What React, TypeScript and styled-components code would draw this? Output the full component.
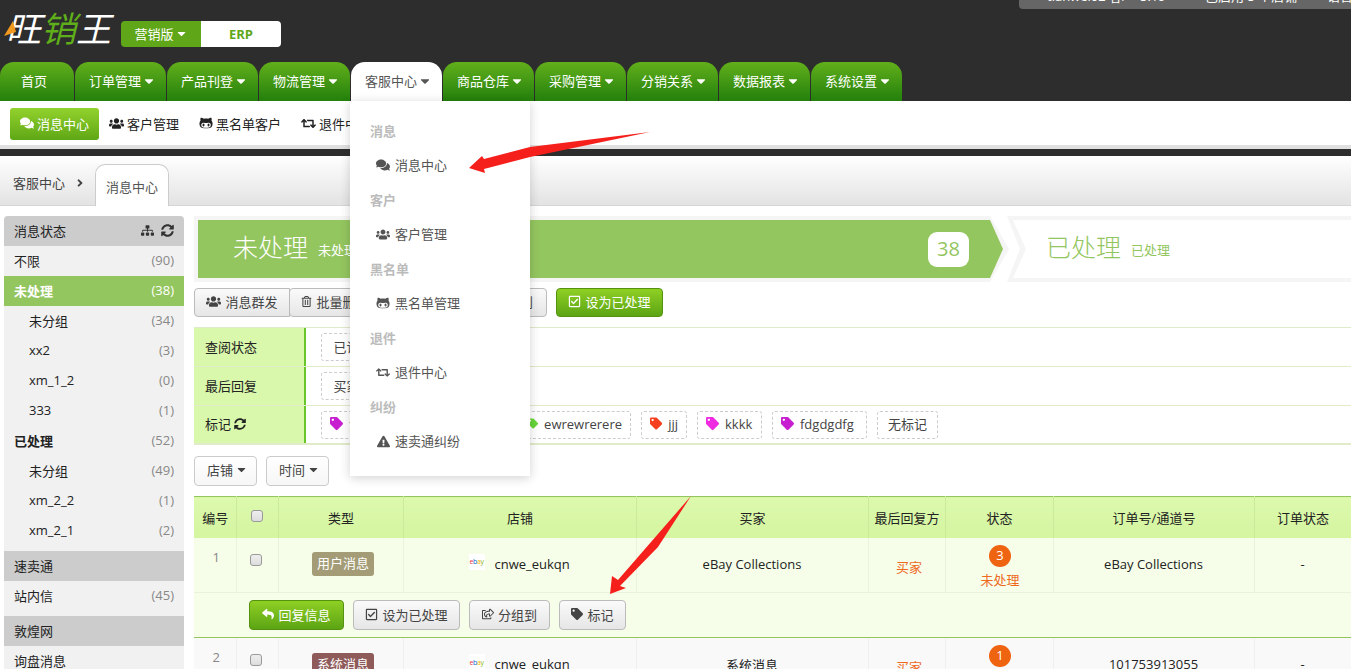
import React from 'react'
import styled, { createGlobalStyle } from 'styled-components'
import {
  FaBars,
  FaCaretDown,
  FaComments,
  FaUsers,
  FaGithubAlt,
  FaRetweet,
  FaExclamationTriangle,
  FaSitemap,
  FaSyncAlt,
  FaRegTrashAlt,
  FaRegCheckSquare,
  FaRegShareSquare,
  FaTag,
  FaReply,
  FaAngleRight,
} from 'react-icons/fa'

const GlobalStyle = createGlobalStyle`
  html, body {
    margin: 0;
    padding: 0;
    height: 669px;
    overflow: hidden;
    background: #fff;
    color: #333;
    font-family: "Open Sans", "Noto Sans CJK SC", sans-serif;
    font-size: 13px;
  }
  * { box-sizing: border-box; }
`

const Page = styled.div`
  position: relative;
  width: 1351px;
  height: 669px;
  overflow: hidden;
`

const Header = styled.header`
  position: relative;
  height: 101px;
  background: #2d2d2d;
  display: flex;
  flex-direction: column;
  justify-content: space-between;
`

const UserBar = styled.div`
  position: absolute;
  top: -13px;
  right: 0;
  width: 332px;
  height: 22px;
  padding-left: 8px;
  background: #666;
  border-radius: 0 0 0 4px;
  color: #fff;
  line-height: 18px;
  white-space: nowrap;
  overflow: hidden;
  display: flex;
`

const UserCell = styled.span<{ $w: number }>`
  width: ${(p) => p.$w}px;
  flex: none;
`

const BrandRow = styled.div`
  display: flex;
  align-items: center;
  height: 62px;
  padding: 4px 0 0 4px;
`

const Logo = styled.div`
  position: relative;
  width: 117px;
  padding-left: 2px;
  margin-top: -12px;
  font-size: 35px;
  line-height: 40px;
  font-style: italic;
  color: #fff;
  white-space: nowrap;
  font-family: "Noto Sans CJK SC", sans-serif;
`

const LogoGreen = styled.span`
  color: #5fae1a;
`

const LogoMark = styled.svg`
  position: absolute;
  left: 0;
  top: 14px;
`

const VersionSwitch = styled.div`
  display: flex;
  width: 160px;
  height: 26px;
  margin-top: 2px;
  border-radius: 4px;
  overflow: hidden;
`

const VersionOn = styled.div`
  width: 80px;
  padding-bottom: 1px;
  display: flex;
  align-items: center;
  justify-content: center;
  gap: 1px;
  background: #5fa718;
  color: #fff;
`

const VersionOff = styled.div`
  width: 80px;
  display: flex;
  align-items: center;
  justify-content: center;
  background: #fff;
  color: #5fa718;
  font-weight: 700;
  font-size: 13px;
`

const Nav = styled.nav`
  display: flex;
  gap: 1px;
  height: 39px;
`

const Tab = styled.div<{ $active?: boolean; $w: number; $pad: number }>`
  width: ${(p) => p.$w}px;
  display: flex;
  align-items: center;
  gap: 1px;
  padding: 0 0 2px ${(p) => p.$pad}px;
  border-radius: 14px 14px 0 0;
  background: ${(p) => (p.$active ? '#fff' : 'linear-gradient(#62af1b, #23800c)')};
  color: ${(p) => (p.$active ? '#555' : '#fff')};
  white-space: nowrap;
  svg { font-size: 14px; }
`

const SubNav = styled.div`
  height: 48px;
  background: #fff;
  border-bottom: 4px solid #e0e0e0;
  padding: 7px 10px 0;
  display: flex;
  gap: 10px;
  align-items: flex-start;
`

const SubActive = styled.div`
  height: 32px;
  width: 89px;
  padding-bottom: 2px;
  border-radius: 3px;
  background: linear-gradient(#93d22d, #5fa716);
  color: #fff;
  display: flex;
  align-items: center;
  justify-content: center;
  gap: 3px;
`

const SubItem = styled.div`
  height: 32px;
  padding-bottom: 2px;
  display: flex;
  align-items: center;
  gap: 3px;
  color: #222;
  margin-right: 10px;
  white-space: nowrap;
`

const DarkStrip = styled.div`
  height: 7px;
  background: #2d2d2d;
`

const Crumbs = styled.div`
  height: 50px;
  background: linear-gradient(#fff, #e3e3e3);
  border-bottom: 1px solid #d5d5d5;
  display: flex;
  align-items: flex-end;
  padding-left: 13px;
`

const CrumbText = styled.div`
  display: flex;
  align-items: center;
  gap: 9px;
  height: 41px;
  width: 82px;
  padding-bottom: 4px;
  color: #444;
  white-space: nowrap;
  svg { font-size: 12px; }
`

const CrumbTab = styled.div`
  width: 74px;
  height: 42px;
  margin-bottom: -1px;
  background: #fff;
  border: 1px solid #ccc;
  border-bottom: none;
  border-radius: 10px 10px 0 0;
  display: flex;
  align-items: center;
  justify-content: center;
  padding-top: 1px;
  color: #555;
`

const Body = styled.div`
  display: flex;
  gap: 10px;
  padding: 10px 0 0 4px;
`

const Sidebar = styled.aside`
  width: 180px;
  flex: none;
  background: #f1f1f1;
  border-radius: 4px 4px 0 0;
  overflow: hidden;
`

const SideHead = styled.div<{ $gap?: number }>`
  height: 30px;
  margin-top: ${(p) => p.$gap || 0}px;
  background: #ccc;
  padding: 0 10px 2px;
  display: flex;
  align-items: center;
  justify-content: space-between;
  color: #222;
`

const SideIcons = styled.div`
  display: flex;
  gap: 7px;
  color: #333;
  font-size: 13px;
  line-height: 0;
`

const SideRow = styled.div<{ $active?: boolean; $indent?: boolean; $bold?: boolean }>`
  height: 30px;
  padding: 0 10px 2px ${(p) => (p.$indent ? 25 : 10)}px;
  display: flex;
  align-items: center;
  justify-content: space-between;
  background: ${(p) => (p.$active ? '#94c65f' : 'transparent')};
  color: ${(p) => (p.$active ? '#fff' : '#222')};
  font-weight: ${(p) => (p.$bold ? 700 : 400)};
`

const Count = styled.span<{ $active?: boolean }>`
  font-weight: 400;
  color: ${(p) => (p.$active ? '#fff' : '#888')};
`

const Main = styled.main`
  flex: 1;
  min-width: 0;
`

const Steps = styled.div`
  display: flex;
  height: 66px;
`

const StepOn = styled.div`
  width: 815px;
  flex: none;
  padding: 4px 0 4px 4px;
  background: #f5f5f5;
  clip-path: polygon(0 0, 796px 0, 815px 50%, 796px 100%, 0 100%);
`

const StepOnInner = styled.div`
  height: 58px;
  width: 805px;
  background: #94c65f;
  clip-path: polygon(0 0, 792px 0, 805px 50%, 792px 100%, 0 100%);
  display: flex;
  align-items: center;
  padding: 0 0 0 35px;
  color: #fff;
`

const StepOff = styled.div`
  flex: 1;
  margin-left: -2px;
  padding: 4px 0 4px 6px;
  background: #f5f5f5;
  clip-path: polygon(0 0, 100% 0, 100% 100%, 0 100%, 13px 50%);
`

const StepOffInner = styled.div`
  height: 58px;
  background: #fff;
  clip-path: polygon(0 0, 100% 0, 100% 100%, 0 100%, 13px 50%);
  display: flex;
  align-items: center;
  padding-left: 33px;
  color: #94c65f;
`

const StepTitle = styled.span`
  font-size: 25px;
  font-weight: 300;
  font-family: "Noto Sans CJK SC", sans-serif;
  margin: -7px 10px 0 0;
`

const StepSub = styled.span`
  font-size: 13px;
  flex: 1;
  margin-top: 1px;
`

const StepBadge = styled.span`
  width: 41px;
  height: 35px;
  margin-right: 34px;
  padding-bottom: 2px;
  border-radius: 9px;
  background: #fff;
  color: #94c65f;
  font-size: 20px;
  display: flex;
  align-items: center;
  justify-content: center;
`

const Toolbar = styled.div`
  display: flex;
  gap: 9px;
  margin-top: 6px;
`

const BtnGroup = styled.div`
  display: flex;
  > * { border-radius: 0; margin-left: -1px; }
  > *:first-child { border-radius: 4px 0 0 4px; margin-left: 0; }
  > *:last-child { border-radius: 0 4px 4px 0; }
`

const Btn = styled.button<{ $w?: number; $h?: number }>`
  height: ${(p) => p.$h || 29}px;
  width: ${(p) => (p.$w ? `${p.$w}px` : 'auto')};
  padding: 0 10px 2px;
  border: 1px solid #bbb;
  border-radius: 4px;
  background: linear-gradient(#fafafa, #e6e6e6);
  color: #444;
  font: inherit;
  display: inline-flex;
  align-items: center;
  justify-content: center;
  gap: 4px;
  white-space: nowrap;
  svg { flex: none; }
`

const EndBtn = styled(Btn)`
  justify-content: flex-end;
  padding-right: 13px;
`

const GreenBtn = styled(Btn)`
  border-color: #55930f;
  background: linear-gradient(#8fd024, #5ca414);
  color: #fff;
`

const DropBtn = styled(Btn)`
  justify-content: flex-start;
  height: 30px;
  padding: 0 0 3px 12px;
  gap: 2px;
  border-color: #ccc;
  background: linear-gradient(#fff, #f6f6f6);
  svg { font-size: 13px; }
`

const Filters = styled.div`
  margin-top: 10px;
`

const FilterRow = styled.div<{ $h: number; $thick?: boolean }>`
  display: flex;
  height: ${(p) => p.$h}px;
  border-bottom: ${(p) => (p.$thick ? 2 : 1)}px solid #e0ebc9;
  &:first-child { border-top: 1px solid #e0ebc9; }
`

const FilterLabel = styled.div`
  width: 112px;
  flex: none;
  background: #d9f8ab;
  border-right: 2px solid #69c52c;
  padding: 0 0 2px 11px;
  display: flex;
  align-items: center;
  gap: 3px;
  color: #222;
`

const FilterTags = styled.div`
  display: flex;
  align-items: center;
  gap: 10px;
  padding-left: 15px;
`

const Chip = styled.div<{ $w?: number }>`
  height: 28px;
  width: ${(p) => (p.$w ? `${p.$w}px` : 'auto')};
  flex: none;
  padding: 0 8px 2px;
  border: 1px dashed #ccc;
  border-radius: 3px;
  display: flex;
  align-items: center;
  gap: 6px;
  color: #444;
  white-space: nowrap;
`

const PlainChip = styled(Chip)`
  justify-content: center;
`

const Dropdowns = styled.div`
  display: flex;
  gap: 9px;
  margin-top: 11px;
`

const Table = styled.table`
  width: 1157px;
  margin-top: 10px;
  border-collapse: collapse;
  table-layout: fixed;
`

const Th = styled.th`
  height: 41px;
  padding: 0 0 0 1px;
  background: linear-gradient(#dcf9ad, #d5f5a0);
  border-top: 1px solid #94c65f;
  border-right: 1px solid #c9eb9a;
  font-weight: 400;
  color: #222;
  white-space: nowrap;
`

const Td = styled.td<{ $alt?: boolean }>`
  height: 55px;
  padding: 0 0 2px;
  text-align: center;
  background: ${(p) => (p.$alt ? '#f9f9f9' : '#f6fee9')};
  border-right: 1px solid ${(p) => (p.$alt ? '#efefef' : '#e9f2da')};
  border-bottom: 1px solid #e9f2da;
  color: #222;
`

const TopTd = styled(Td)`
  vertical-align: top;
  padding: 10px 0 0;
  color: #888;
`

const NumberTd = styled(TopTd)`
  padding-left: 3px;
`

const TypeTd = styled(Td)`
  padding: 0 0 1px 5px;
`

const ReplierTd = styled(Td)`
  padding: 3px 0 0 5px;
`

const StatusTd = styled(TopTd)`
  padding: 7px 0 0 2px;
`

const ActionTd = styled.td`
  height: 45px;
  padding: 0 0 0 55px;
  background: #f6fee9;
  border-bottom: 1px solid #94c65f;
`

const Actions = styled.div`
  display: flex;
  gap: 9px;
`

const Check = styled.span`
  display: inline-block;
  width: 12px;
  height: 12px;
  margin-right: 2px;
  border: 1px solid #999;
  border-radius: 3px;
  background: linear-gradient(#eee, #ddd);
`

const RowCheck = styled(Check)`
  margin-top: 6px;
`

const TypeLabel = styled.span<{ $color: string }>`
  display: inline-block;
  height: 24px;
  padding: 0 5px;
  line-height: 23px;
  border-radius: 3px;
  background: ${(p) => p.$color};
  color: #fff;
`

const Store = styled.div`
  display: flex;
  align-items: center;
  gap: 10px;
  padding-left: 65px;
`

const EbayMark = styled.span`
  width: 16px;
  height: 16px;
  background: #fff;
  display: inline-flex;
  align-items: center;
  justify-content: center;
  font-size: 7px;
  letter-spacing: -0.4px;
  margin-top: -4px;
  line-height: 1;
`

const Letter = styled.span<{ $c: string }>`
  color: ${(p) => p.$c};
`

const Orange = styled.div`
  color: #ee6a1f;
`

const StatusDot = styled.div`
  width: 22px;
  height: 22px;
  margin: 0 auto 3px;
  border-radius: 50%;
  background: #ee6411;
  color: #fff;
  line-height: 21px;
  text-align: center;
`

const Menu = styled.div`
  position: absolute;
  left: 350px;
  top: 101px;
  width: 180px;
  height: 375px;
  padding: 15px 0 0 20px;
  background: #fff;
  box-shadow: 0 2px 10px rgba(0, 0, 0, 0.18);
`

const MenuGroup = styled.div`
  height: 69px;
`

const MenuHead = styled.div`
  height: 30px;
  line-height: 30px;
  color: #bbb;
  font-weight: 700;
`

const MenuItem = styled.div`
  height: 24px;
  margin-top: 7px;
  padding-left: 6px;
  display: flex;
  align-items: center;
  gap: 5px;
  color: #555;
  line-height: 24px;
`

const MenuIcon = styled.span`
  width: 14px;
  display: flex;
  justify-content: center;
  flex: none;
`

const Arrow = styled.svg<{ $x: number; $y: number }>`
  position: absolute;
  left: ${(p) => p.$x}px;
  top: ${(p) => p.$y}px;
  pointer-events: none;
`

const tabs = [
  { label: '首页', w: 74, pad: 21 },
  { label: '订单管理', w: 91, pad: 14, caret: true },
  { label: '产品刊登', w: 91, pad: 14, caret: true },
  { label: '物流管理', w: 91, pad: 14, caret: true },
  { label: '客服中心', w: 91, pad: 14, caret: true, active: true },
  { label: '商品仓库', w: 91, pad: 14, caret: true },
  { label: '采购管理', w: 91, pad: 14, caret: true },
  { label: '分销关系', w: 91, pad: 14, caret: true },
  { label: '数据报表', w: 91, pad: 14, caret: true },
  { label: '系统设置', w: 91, pad: 14, caret: true },
]

const sideRows = [
  { label: '不限', n: 90 },
  { label: '未处理', n: 38, active: true, bold: true },
  { label: '未分组', n: 34, indent: true },
  { label: 'xx2', n: 3, indent: true },
  { label: 'xm_1_2', n: 0, indent: true },
  { label: '333', n: 1, indent: true },
  { label: '已处理', n: 52, bold: true },
  { label: '未分组', n: 49, indent: true },
  { label: 'xm_2_2', n: 1, indent: true },
  { label: 'xm_2_1', n: 2, indent: true },
]

const menuGroups = [
  { head: '消息', item: '消息中心', icon: <FaComments size={14} /> },
  { head: '客户', item: '客户管理', icon: <FaUsers size={15} /> },
  { head: '黑名单', item: '黑名单管理', icon: <FaGithubAlt size={14} /> },
  { head: '退件', item: '退件中心', icon: <FaRetweet size={15} /> },
  { head: '纠纷', item: '速卖通纠纷', icon: <FaExclamationTriangle size={13} /> },
]

const tags = [
  { label: 'ewrewrerere', color: '#66d63a', w: 112 },
  { label: 'jjj', color: '#f4401e', w: 46 },
  { label: 'kkkk', color: '#ee2be0', w: 65 },
  { label: 'fdgdgdfg', color: '#c71fd0', w: 95 },
]

const columns = [42, 42, 125, 233, 232, 77, 108, 201, 97]

const EbayLogo = () => (
  <EbayMark>
    <Letter $c="#e53238">e</Letter>
    <Letter $c="#0064d2">b</Letter>
    <Letter $c="#f5af02">a</Letter>
    <Letter $c="#86b817">y</Letter>
  </EbayMark>
)

export default function App() {
  return (
    <Page>
      <GlobalStyle />
      <Header>
        <UserBar>
          <UserCell $w={20}>
            <FaBars size={10} />
          </UserCell>
          <UserCell $w={93}>tianwei02 客/</UserCell>
          <UserCell $w={65}>5:19</UserCell>
          <UserCell $w={122}>已启用 5 个店铺</UserCell>
          <UserCell $w={30}>语言</UserCell>
        </UserBar>
        <BrandRow>
          <Logo>
            <LogoMark width="14" height="16" viewBox="0 0 14 16">
              <polygon points="0,15 9,0 12,11" fill="#f29a1f" />
            </LogoMark>
            旺<LogoGreen>销</LogoGreen>王
          </Logo>
          <VersionSwitch>
            <VersionOn>
              营销版 <FaCaretDown size={13} />
            </VersionOn>
            <VersionOff>ERP</VersionOff>
          </VersionSwitch>
        </BrandRow>
        <Nav>
          {tabs.map((t) => (
            <Tab key={t.label} $w={t.w} $pad={t.pad} $active={t.active}>
              {t.label}
              {t.caret && <FaCaretDown />}
            </Tab>
          ))}
        </Nav>
      </Header>

      <SubNav>
        <SubActive>
          <FaComments size={14} /> 消息中心
        </SubActive>
        <SubItem>
          <FaUsers size={15} /> 客户管理
        </SubItem>
        <SubItem>
          <FaGithubAlt size={14} /> 黑名单客户
        </SubItem>
        <SubItem>
          <FaRetweet size={15} /> 退件中心
        </SubItem>
      </SubNav>
      <DarkStrip />

      <Crumbs>
        <CrumbText>
          客服中心 <FaAngleRight />
        </CrumbText>
        <CrumbTab>消息中心</CrumbTab>
      </Crumbs>

      <Body>
        <Sidebar>
          <SideHead>
            消息状态
            <SideIcons>
              <FaSitemap />
              <FaSyncAlt />
            </SideIcons>
          </SideHead>
          {sideRows.map((r, i) => (
            <SideRow key={i} $active={r.active} $indent={r.indent} $bold={r.bold}>
              {r.label}
              <Count $active={r.active}>({r.n})</Count>
            </SideRow>
          ))}
          <SideHead $gap={5}>速卖通</SideHead>
          <SideRow>
            站内信
            <Count>(45)</Count>
          </SideRow>
          <SideHead $gap={5}>敦煌网</SideHead>
          <SideRow>询盘消息</SideRow>
        </Sidebar>

        <Main>
          <Steps>
            <StepOn>
              <StepOnInner>
                <StepTitle>未处理</StepTitle>
                <StepSub>未处理</StepSub>
                <StepBadge>38</StepBadge>
              </StepOnInner>
            </StepOn>
            <StepOff>
              <StepOffInner>
                <StepTitle>已处理</StepTitle>
                <StepSub>已处理</StepSub>
              </StepOffInner>
            </StepOff>
          </Steps>

          <Toolbar>
            <BtnGroup>
              <Btn $w={96}>
                <FaUsers size={15} /> 消息群发
              </Btn>
              <Btn $w={92}>
                <FaRegTrashAlt size={11} /> 批量删除
              </Btn>
              <Btn $w={81}>
                <FaTag size={11} /> 标记
              </Btn>
              <EndBtn $w={87}>
                <FaRegShareSquare size={12} /> 分组到
              </EndBtn>
            </BtnGroup>
            <GreenBtn $w={107}>
              <FaRegCheckSquare size={13} /> 设为已处理
            </GreenBtn>
          </Toolbar>

          <Filters>
            <FilterRow $h={40}>
              <FilterLabel>查阅状态</FilterLabel>
              <FilterTags>
                <Chip>&nbsp;已读&nbsp;</Chip>
              </FilterTags>
            </FilterRow>
            <FilterRow $h={39}>
              <FilterLabel>最后回复</FilterLabel>
              <FilterTags>
                <Chip>&nbsp;买家&nbsp;</Chip>
              </FilterTags>
            </FilterRow>
            <FilterRow $h={39} $thick>
              <FilterLabel>
                标记 <FaSyncAlt size={12} color="#222" />
              </FilterLabel>
              <FilterTags>
                <Chip $w={188}>
                  <FaTag size={13} color="#c71fd0" /> 消息标记
                </Chip>
                {tags.map((t) => (
                  <Chip key={t.label} $w={t.w}>
                    <FaTag size={13} color={t.color} /> {t.label}
                  </Chip>
                ))}
                <PlainChip $w={61}>无标记</PlainChip>
              </FilterTags>
            </FilterRow>
          </Filters>

          <Dropdowns>
            <DropBtn $w={63}>
              店铺 <FaCaretDown />
            </DropBtn>
            <DropBtn $w={63}>
              时间 <FaCaretDown />
            </DropBtn>
          </Dropdowns>

          <Table>
            <colgroup>
              {columns.map((w, i) => (
                <col key={i} width={w} />
              ))}
            </colgroup>
            <thead>
              <tr>
                <Th>编号</Th>
                <Th>
                  <Check />
                </Th>
                <Th>类型</Th>
                <Th>店铺</Th>
                <Th>买家</Th>
                <Th>最后回复方</Th>
                <Th>状态</Th>
                <Th>订单号/通道号</Th>
                <Th>订单状态</Th>
              </tr>
            </thead>
            <tbody>
              <tr>
                <NumberTd>1</NumberTd>
                <TopTd>
                  <RowCheck />
                </TopTd>
                <TypeTd>
                  <TypeLabel $color="#a39c76">用户消息</TypeLabel>
                </TypeTd>
                <Td>
                  <Store>
                    <EbayLogo /> cnwe_eukqn
                  </Store>
                </Td>
                <Td>eBay Collections</Td>
                <ReplierTd>
                  <Orange>买家</Orange>
                </ReplierTd>
                <StatusTd>
                  <StatusDot>3</StatusDot>
                  <Orange>未处理</Orange>
                </StatusTd>
                <Td>eBay Collections</Td>
                <Td>-</Td>
              </tr>
              <tr>
                <ActionTd colSpan={9}>
                  <Actions>
                    <GreenBtn $w={95} $h={30}>
                      <FaReply size={12} /> 回复信息
                    </GreenBtn>
                    <Btn $w={107} $h={30}>
                      <FaRegCheckSquare size={13} /> 设为已处理
                    </Btn>
                    <Btn $w={81} $h={30}>
                      <FaRegShareSquare size={12} /> 分组到
                    </Btn>
                    <Btn $w={67} $h={30}>
                      <FaTag size={12} /> 标记
                    </Btn>
                  </Actions>
                </ActionTd>
              </tr>
              <tr>
                <NumberTd $alt>2</NumberTd>
                <TopTd $alt>
                  <RowCheck />
                </TopTd>
                <TypeTd $alt>
                  <TypeLabel $color="#8e5a5a">系统消息</TypeLabel>
                </TypeTd>
                <Td $alt>
                  <Store>
                    <EbayLogo /> cnwe_eukqn
                  </Store>
                </Td>
                <Td $alt>系统消息</Td>
                <ReplierTd $alt>
                  <Orange>买家</Orange>
                </ReplierTd>
                <StatusTd $alt>
                  <StatusDot>1</StatusDot>
                  <Orange>未处理</Orange>
                </StatusTd>
                <Td $alt>101753913055</Td>
                <Td $alt>-</Td>
              </tr>
            </tbody>
          </Table>
        </Main>
      </Body>

      <Menu>
        {menuGroups.map((g) => (
          <MenuGroup key={g.head}>
            <MenuHead>{g.head}</MenuHead>
            <MenuItem>
              <MenuIcon>{g.icon}</MenuIcon>
              {g.item}
            </MenuItem>
          </MenuGroup>
        ))}
      </Menu>

      <Arrow $x={465} $y={128} width="190" height="50" viewBox="465 128 190 50">
        <polygon
          points="650,132 530,147 484,159 482,156 469,168 485,173 484,169 530,157"
          fill="#f5201b"
        />
      </Arrow>
      <Arrow $x={605} $y={492} width="92" height="106" viewBox="605 492 92 106">
        <polygon
          points="691,496 618,580 612,576 610,594 626,588 620,586 658,547"
          fill="#f5201b"
        />
      </Arrow>
    </Page>
  )
}
